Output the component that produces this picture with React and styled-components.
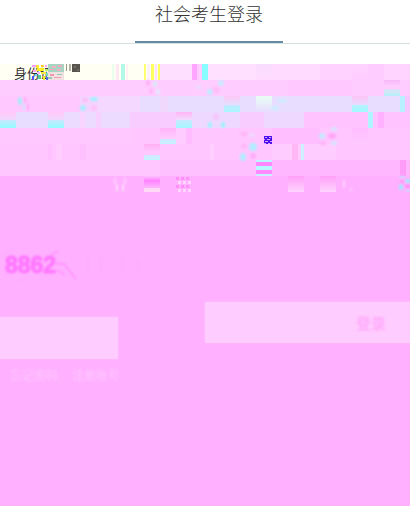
import styled, { createGlobalStyle } from "styled-components";

const GlobalStyle = createGlobalStyle`
  * {
    box-sizing: border-box;
  }

  body {
    margin: 0;
    background: #ffb0ff;
    color: #333;
    font-family: "Liberation Sans", "Noto Sans CJK SC", sans-serif;
  }
`;

const Page = styled.div`
  overflow: hidden;
`;

const Header = styled.header`
  display: flex;
  justify-content: center;
  padding-left: 8px;
  height: 44px;
  background: #fff;
  border-bottom: 1px solid #d8dfe3;
`;

const Tab = styled.h1`
  width: 148px;
  height: 43px;
  margin: 0;
  border-bottom: 2px solid #668ba4;
  font-size: 18px;
  font-weight: 300;
  line-height: 30px;
  text-align: center;
`;

const Form = styled.form`
  padding-top: 20px;
  background: #fff;
`;

const Glitch = styled.div`
  position: relative;
  height: 128px;
  overflow: hidden;
  background: #ffc6ff;
`;

const Noise = styled.svg`
  position: absolute;
  top: 0;
  left: 0;
`;

const Field = styled.div`
  display: flex;
  height: 16px;
  padding-left: 14px;
  background: linear-gradient(90deg, #fffff4 160px, #ffd8ff 160px);
`;

const Label = styled.label`
  font-size: 13px;
  line-height: 20px;
`;

const IdInput = styled.input`
  flex: 1;
  min-width: 0;
  border: 0;
  outline: 0;
  background: transparent;
`;

const Lower = styled.div`
  padding-top: 56px;
  min-height: 314px;
  background: #ffb0ff;
`;

const Captcha = styled.svg`
  display: block;
`;

const Actions = styled.div`
  display: grid;
  grid-template-columns: 118px 1fr;
  column-gap: 87px;
  align-items: start;
  padding-top: 14px;
`;

const Remainder = styled.div`
  padding-top: 15px;
`;

const Bar = styled.div`
  height: 42px;
  background: #ffccff;
  box-shadow: 0 0 3px #ffc0ff;
`;

const Submit = styled.button`
  height: 41px;
  padding: 0 24px 0 0;
  border: 0;
  background: #ffccff;
  box-shadow: 0 0 3px #ffc0ff;
  color: #ffacfa;
  font-family: inherit;
  font-size: 15px;
  font-weight: 700;
  text-align: right;
`;

const Soft = styled.span`
  filter: blur(1px);
`;

const Links = styled.nav`
  display: flex;
  gap: 14px;
  padding: 8px 0 0 10px;
`;

const FaintLink = styled.a`
  color: #ffc8ff;
  font-size: 12px;
  line-height: 18px;
  text-decoration: none;
  white-space: nowrap;
  filter: blur(1px);
`;

// x, y, width, height, top colour, bottom colour (optional)
const blocks = [
  // 0 - 16
  [112, 0, 2, 16, "#e8fff0"],
  [116, 0, 3, 16, "#ffe8f4"],
  [121, 0, 4, 16, "#b4f8e8"],
  [126, 0, 2, 16, "#fff0f4"],
  [144, 0, 2, 16, "#ffff70"],
  [147, 0, 3, 16, "#fff0ff"],
  [151, 0, 3, 16, "#ffff60"],
  [155, 0, 2, 16, "#ffe0ff"],
  [158, 0, 2, 16, "#ffff60"],
  [160, 0, 32, 16, "#ffdfff"],
  [192, 0, 5, 16, "#ffa4ff"],
  [197, 0, 5, 16, "#ffccff"],
  [202, 0, 6, 16, "#88ffff"],
  [208, 0, 48, 16, "#ffe0ff"],
  [256, 0, 16, 16, "#f8dcff", "#ffdcff"],
  [272, 0, 48, 16, "#ffdcff"],
  [320, 0, 32, 16, "#ffd2ff"],
  [352, 0, 16, 16, "#ffd4ff", "#ffccff"],
  [368, 0, 16, 16, "#ffccff"],
  [384, 0, 26, 16, "#ffd4ff"],
  // 16 - 32
  [0, 16, 410, 16, "#ffccff"],
  [288, 16, 64, 16, "#ffc8ff"],
  [384, 16, 16, 7, "#f8b8f8", "#ffd0ff"],
  [384, 25, 16, 7, "#e0e0f8", "#b4f0f8"],
  // 32 - 48
  [0, 32, 80, 16, "#ffc8ff"],
  [80, 32, 18, 16, "#f4d4ff"],
  [98, 32, 42, 16, "#f4d8ff"],
  [140, 32, 270, 16, "#e8dcff"],
  [160, 32, 8, 16, "#f0d8fc"],
  [224, 32, 16, 9, "#fcc8f4", "#e4e0ff"],
  [224, 41, 16, 7, "#c4e8ff", "#a8f8ff"],
  [256, 32, 16, 16, "#e8fff4", "#e8dcff"],
  [352, 32, 16, 9, "#fcc4f4", "#e8dcff"],
  [352, 41, 16, 7, "#b8f0ff", "#a0faff"],
  [400, 32, 5, 16, "#b8f0ff"],
  [405, 32, 5, 16, "#f4c8ff"],
  // 48 - 64
  [0, 48, 410, 16, "#ffc4ff"],
  [0, 48, 16, 8, "#ffc8f8", "#f0d8ff"],
  [0, 56, 16, 8, "#c8e8ff", "#90fcff"],
  [16, 48, 32, 16, "#e8dcff"],
  [48, 48, 16, 8, "#ffc8f8", "#f0d8ff"],
  [48, 56, 16, 8, "#c8e8ff", "#90fcff"],
  [64, 48, 66, 16, "#ecdaff"],
  [80, 48, 5, 16, "#f8d4ff"],
  [96, 48, 5, 16, "#f8d0ff"],
  [130, 48, 46, 16, "#f8ccff"],
  [176, 48, 16, 8, "#ffb4f4", "#f0dcff"],
  [176, 56, 16, 8, "#c8e8ff", "#a4f8ff"],
  [192, 48, 112, 16, "#eed8ff"],
  [240, 48, 24, 16, "#f8ccff"],
  [368, 48, 5, 16, "#b0f4ff"],
  [378, 48, 6, 16, "#ffb0ff"],
  // 64 - 80
  [0, 64, 130, 16, "#ffc8ff"],
  [160, 64, 16, 11, "#ffb4f8", "#ffccff"],
  [160, 75, 16, 5, "#d0e8ff", "#c4f0ff"],
  [176, 64, 10, 16, "#ffccff"],
  [186, 64, 6, 16, "#ffbcff"],
  [272, 64, 48, 16, "#ffbeff"],
  [352, 64, 16, 16, "#ffbeff", "#ffc8ff"],
  // 80 - 96
  [48, 80, 4, 16, "#ffc0ff"],
  [56, 80, 6, 16, "#ffceff"],
  [80, 80, 6, 16, "#ffc0ff"],
  [144, 80, 16, 9, "#ffb0f4", "#ffccff"],
  [144, 91, 16, 5, "#d8e8ff", "#c0f4ff"],
  [210, 80, 4, 16, "#ffd0ff"],
  [272, 80, 64, 16, "#ffccff"],
  [292, 80, 6, 16, "#ffb8f4"],
  [301, 80, 3, 16, "#ccf0ff"],
  // 96 - 112
  [160, 96, 96, 16, "#ffc0ff"],
  [256, 96, 16, 2, "#c0f4ff"],
  [256, 98, 16, 4, "#ff88ff"],
  [256, 102, 16, 4, "#b8f8ff"],
  [256, 106, 16, 4, "#ff88ff"],
  [256, 110, 16, 2, "#c8f0ff"],
  [272, 96, 138, 16, "#ffb8ff"],
  [400, 96, 6, 16, "#ff9cf8"],
  // 112 - 128
  [0, 112, 410, 16, "#ffb0ff"],
  [144, 112, 16, 4, "#ffc0ff", "#ff90ff"],
  [144, 116, 16, 6, "#ff7cff", "#ffa8ff"],
  [144, 124, 16, 4, "#ffd8f8"],
  [288, 112, 16, 16, "#ffa0f8", "#ffd4ff"],
  [320, 112, 16, 16, "#ffa0f8", "#ffd4ff"],
];

// small cells drawn over the blocks: x, y, width, height, colour
const specks = [
  // remains of the label
  [32, 1, 4, 2, "#ff9cff"],
  [36, 1, 3, 3, "#ffe83c"],
  [41, 1, 3, 2, "#ffd428"],
  [45, 1, 2, 2, "#ff9cff"],
  [37, 4, 7, 3, "#fff020"],
  [45, 5, 3, 2, "#b8f060"],
  [33, 6, 3, 2, "#ffa8f0"],
  [41, 8, 5, 2, "#ffec40"],
  [37, 8, 3, 2, "#f4b4ff"],
  [32, 12, 2, 4, "#5850ff"],
  [35, 10, 2, 2, "#68e0ff"],
  [38, 11, 3, 4, "#58c890"],
  [43, 12, 2, 4, "#e8f028"],
  [46, 9, 2, 3, "#70dcb4"],
  [46, 13, 2, 3, "#5068f0"],
  [48, 0, 16, 8, "#a8d4c4"],
  [52, 2, 4, 2, "#f4b0c0"],
  [58, 1, 4, 2, "#f0a8c0"],
  [49, 5, 5, 1, "#ecaabc"],
  [57, 5, 4, 2, "#f0b0c4"],
  [48, 8, 16, 8, "#f0e0e0"],
  [50, 10, 4, 2, "#f098b0"],
  [57, 10, 5, 1, "#90ccb8"],
  [48, 13, 4, 2, "#98ccb8"],
  [54, 13, 7, 1, "#f0a0b4"],
  [66, 0, 1, 7, "#99998c"],
  [69, 0, 2, 7, "#b4b4a8"],
  [72, 0, 8, 8, "#57544e"],
  [74, 2, 2, 2, "#77746c"],
  [77, 5, 2, 2, "#6c6a64"],
];

const blobs = [
  [20, 37, 2, 4, "#88f8f8"],
  [25, 36, 1, 4, "#ff9cf4"],
  [28, 43, 1, 4, "#ff9cf4"],
  [24, 43, 1, 4, "#b8f0ff"],
  [94, 35, 4, 2, "#88fcff"],
  [83, 44, 3, 3, "#98f4ff"],
  [85, 36, 3, 2, "#ffb4f4"],
  [94, 44, 3, 3, "#ffbcf4"],
  [148, 19, 2, 3, "#f8a8f4"],
  [155, 20, 2, 3, "#c8f4f4"],
  [151, 27, 2, 3, "#ffb0f4"],
  [158, 28, 2, 3, "#d8f4ff"],
  [199, 23, 3, 2, "#e4e0ff"],
  [210, 28, 3, 3, "#a8f8ff"],
  [221, 19, 3, 3, "#b8f4ff"],
  [216, 26, 4, 3, "#ffb8f4"],
  [282, 37, 5, 2, "#c8f0ff"],
  [275, 44, 4, 2, "#c0f4ff"],
  [210, 61, 2, 3, "#80fcff"],
  [223, 61, 2, 3, "#80fcff"],
  [216, 53, 3, 3, "#f8bcfa"],
  [244, 70, 4, 2, "#ffb0f4"],
  [252, 71, 4, 2, "#ecdcff"],
  [253, 83, 4, 4, "#98f8ff"],
  [243, 93, 3, 4, "#98f8ff"],
  [244, 82, 3, 2, "#ffacf4"],
  [253, 92, 3, 3, "#ffa4f4"],
  [322, 72, 3, 3, "#b4f4ff"],
  [334, 65, 3, 2, "#c4f0ff"],
  [332, 72, 4, 3, "#ff9cf4"],
  [334, 79, 3, 2, "#c4f0ff"],
  [323, 79, 3, 2, "#ffacf4"],
  [115, 117, 1, 4, "#ffe0ff"],
  [125, 117, 1, 4, "#ffe0ff"],
  [117, 124, 1, 4, "#fff0ff"],
  [123, 124, 1, 4, "#fff0ff"],
  [344, 120, 1, 4, "#ffe4ff"],
  [351, 126, 1, 2, "#ffd8ff"],
  [402, 113, 3, 1, "#a8f4ff"],
  [408, 117, 3, 2, "#80fcff"],
  [401, 123, 2, 3, "#80fcff"],
  [408, 127, 3, 1, "#a8f4ff"],
  [402, 118, 2, 2, "#ff84f4"],
  [408, 122, 3, 2, "#ff84f4"],
];

function NoiseBlocks() {
  return (
    <Noise width="410" height="128" viewBox="0 0 410 128" aria-hidden="true">
      <defs>
        {blocks.map(([, , , , from, to], i) =>
          to ? (
            <linearGradient key={i} id={`fade${i}`} x1="0" y1="0" x2="0" y2="1">
              <stop offset="0" stopColor={from} />
              <stop offset="1" stopColor={to} />
            </linearGradient>
          ) : null
        )}
        <filter id="soften">
          <feGaussianBlur stdDeviation="1" />
        </filter>
      </defs>
      {blocks.map(([x, y, w, h, from, to], i) => (
        <rect
          key={i}
          x={x}
          y={y}
          width={w}
          height={h}
          fill={to ? `url(#fade${i})` : from}
        />
      ))}
      {specks.map(([x, y, w, h, fill], i) => (
        <rect key={i} x={x} y={y} width={w} height={h} fill={fill} />
      ))}
      <g filter="url(#soften)" opacity="0.75">
        {blobs.map(([cx, cy, rx, ry, fill], i) => (
          <ellipse key={i} cx={cx} cy={cy} rx={rx} ry={ry} fill={fill} />
        ))}
      </g>
      {[0, 1, 2, 3].map((row) =>
        [0, 1, 2].map((col) => (
          <rect
            key={`${row}-${col}`}
            x={176 + col * 5 + (row % 2) * 2}
            y={113 + row * 4}
            width="3"
            height="3"
            fill={row % 2 ? "#ffd4ff" : "#ff90f8"}
          />
        ))
      )}
      <rect x="264" y="72" width="8" height="8" fill="#4a10f0" />
      <path
        d="M265 73.5h2M269 73.5h2M264 75.5h1M267 75.5h3M265 77.5h3M270 77.5h2M264 79.5h2M268 79.5h2"
        stroke="#d8a0ff"
        strokeWidth="1"
      />
    </Noise>
  );
}

function App() {
  return (
    <Page>
      <GlobalStyle />
      <Header>
        <Tab>社会考生登录</Tab>
      </Header>
      <Form onSubmit={(e) => e.preventDefault()}>
        <Glitch>
          <Field>
            <Label htmlFor="idCard">身份证</Label>
            <IdInput id="idCard" type="text" />
          </Field>
          <NoiseBlocks />
        </Glitch>
        <Lower>
          <Captcha width="160" height="40" viewBox="0 0 160 40">
            <defs>
              <filter id="smudge">
                <feGaussianBlur stdDeviation="1" />
              </filter>
            </defs>
            <g filter="url(#smudge)" fill="#ff78ff">
              <text
                x="5"
                y="25"
                fontFamily="Liberation Sans, sans-serif"
                fontSize="23"
                fontWeight="700"
                stroke="#ff78ff"
                strokeWidth="1"
              >
                8862
              </text>
              <path
                d="M50 8L58 3M54 15L64 16L76 31M57 22L65 27"
                fill="none"
                stroke="#ff94ff"
                strokeWidth="2"
              />
              <path
                d="M3 5L14 2M18 33L30 29M40 31L48 28M88 10v14M101 10v14M122 10v12M138 12v10"
                fill="none"
                stroke="#ffacff"
                strokeWidth="2"
              />
            </g>
          </Captcha>
          <Actions>
            <Remainder>
              <Bar />
              <Links>
                <FaintLink href="#forgot">忘记密码</FaintLink>
                <FaintLink href="#register">注册账号</FaintLink>
              </Links>
            </Remainder>
            <Submit type="submit">
              <Soft>登录</Soft>
            </Submit>
          </Actions>
        </Lower>
      </Form>
    </Page>
  );
}

export default App;
